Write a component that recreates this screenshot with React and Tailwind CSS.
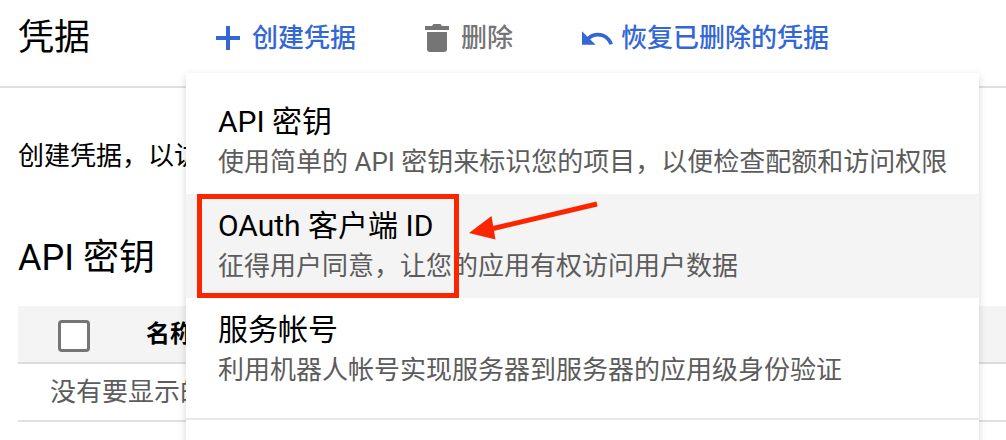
import React from 'react';

function PlusIcon() {
  return (
    <svg width="24" height="24" viewBox="0 0 24 24" fill="currentColor" aria-hidden="true">
      <path d="M10 0h4v10h10v4H14v10h-4V14H0v-4h10z" />
    </svg>
  );
}

function TrashIcon() {
  return (
    <svg width="24" height="28" viewBox="0 0 24 28" fill="currentColor" aria-hidden="true">
      <path d="M0 2h7l1.5-2h7L17 2h7v4H0zM2 8h20v17a3 3 0 0 1-3 3H5a3 3 0 0 1-3-3z" />
    </svg>
  );
}

function UndoIcon() {
  return (
    <svg width="31" height="14" viewBox="2 7 20.5 9" fill="currentColor" aria-hidden="true">
      <path d="M12.5 8c-2.65 0-5.05.99-6.9 2.6L2 7v9h9l-3.62-3.62c1.39-1.16 3.16-1.88 5.12-1.88 3.54 0 6.55 2.31 7.6 5.5l2.37-.78C21.08 11.03 17.15 8 12.5 8z" />
    </svg>
  );
}

function Highlight() {
  return (
    <span className="pointer-events-none absolute inset-y-0 left-[11px] flex" aria-hidden="true">
      <span className="w-[262px] border-[5px] border-[#fb2600]" />
      <svg className="ml-2" width="134" height="48" viewBox="0 0 134 48">
        <path d="M26 34.500 130 10" stroke="#fb2600" strokeWidth="5" />
        <path d="M2 39 24.500 22 28.500 45.500z" fill="#fb2600" />
      </svg>
    </span>
  );
}

function MenuItem({ title, detail, highlighted }) {
  return (
    <button
      type="button"
      role="menuitem"
      className={
        'relative flex w-full flex-col px-8 py-3 text-left ' +
        (highlighted ? 'bg-[#f4f4f4]' : 'bg-white')
      }
    >
      <span className="text-[30px] leading-10 whitespace-nowrap text-black">{title}</span>
      <span className="text-[26px] leading-10 whitespace-nowrap text-[#5c5c5c]">{detail}</span>
      {highlighted && <Highlight />}
    </button>
  );
}

export default function App() {
  return (
    <div className="relative min-h-screen overflow-hidden bg-white font-['Roboto','Noto_Sans_CJK_SC',sans-serif] text-[26px] leading-10 text-black">
      <header className="flex h-[88px] items-center border-b-2 border-[#e0e0e0] pb-[10px] pl-[18px] whitespace-nowrap">
        <h1 className="text-[36px]">凭据</h1>
        <div className="ml-[126px] flex items-center gap-[69px] font-medium">
          <button type="button" aria-haspopup="menu" aria-expanded="true" className="flex items-center gap-3 text-[#3367d6]">
            <PlusIcon />
            创建凭据
          </button>
          <button type="button" disabled className="flex items-center gap-3 text-[#757575]">
            <TrashIcon />
            删除
          </button>
          <button type="button" className="flex items-center gap-2 text-[#3367d6]">
            <UndoIcon />
            恢复已删除的凭据
          </button>
        </div>
      </header>

      <main className="pt-12 pl-[18px]">
        <p className="whitespace-nowrap">创建凭据，以访</p>
        <h2 className="mt-[60px] text-[36px] leading-[44px]">API 密钥</h2>
        <table className="mt-[26px] w-full border-collapse text-left">
          <thead>
            <tr className="h-[57px] border-b-2 border-[#dcdcdc] bg-[#f4f4f4]">
              <th className="w-[128px] pt-[3px] pl-10">
                <input
                  type="checkbox"
                  aria-label="全选"
                  className="block size-8 appearance-none rounded-[4px] border-[3px] border-[#757575] bg-white"
                />
              </th>
              <th className="text-[24px] font-bold">名称</th>
            </tr>
          </thead>
          <tbody>
            <tr className="h-[58px] border-b-2 border-[#e0e0e0]">
              <td colSpan={2} className="pl-8 text-[#5c5c5c]">没有要显示的</td>
            </tr>
          </tbody>
        </table>
      </main>

      <div
        role="menu"
        aria-label="创建凭据"
        className="absolute top-[73px] right-[27px] -bottom-4 left-[186px] bg-white pt-[17px] shadow-[0_3px_8px_rgba(0,0,0,0.16)]"
      >
        <MenuItem title="API 密钥" detail="使用简单的 API 密钥来标识您的项目，以便检查配额和访问权限" />
        <MenuItem title="OAuth 客户端 ID" detail="征得用户同意，让您的应用有权访问用户数据" highlighted />
        <MenuItem title="服务帐号" detail="利用机器人帐号实现服务器到服务器的应用级身份验证" />
        <hr className="mt-4 border-t-2 border-[#e8e8e8]" />
      </div>
    </div>
  );
}
